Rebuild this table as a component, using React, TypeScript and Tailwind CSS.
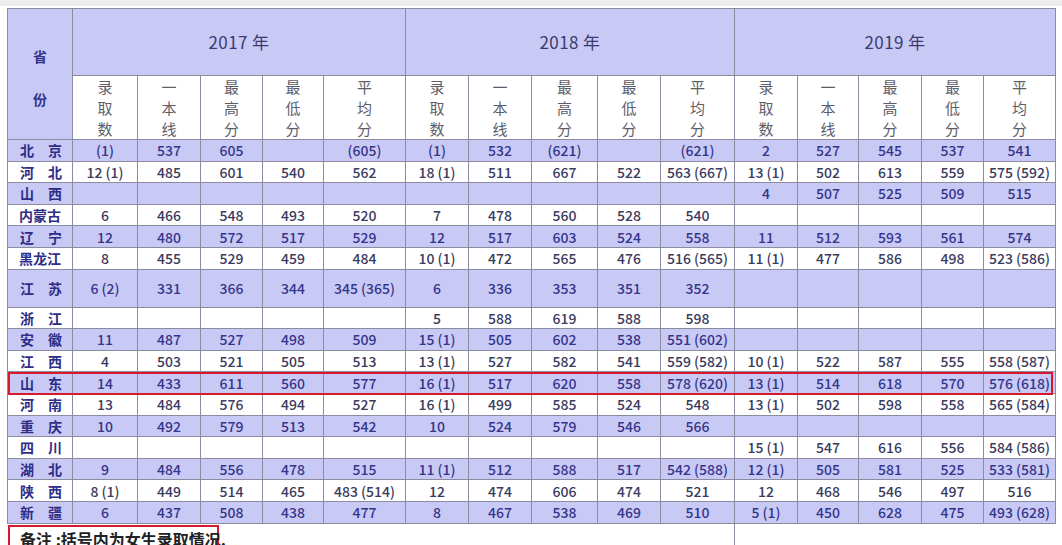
const cols2017 = ["录取数", "一本线", "最高分", "最低分", "平均分"];
const widths = [65, 65, 63, 62, 61, 82, 63, 63, 66, 63, 74, 63, 61, 63, 62, 72];

type Row = { p: string; hi?: boolean; tall?: boolean; d: string[] };

const rows: Row[] = [
  { p: "北京", hi: true, d: ["(1)", "537", "605", "", "(605)", "(1)", "532", "(621)", "", "(621)", "2", "527", "545", "537", "541"] },
  { p: "河北", d: ["12(1)", "485", "601", "540", "562", "18(1)", "511", "667", "522", "563(667)", "13(1)", "502", "613", "559", "575(592)"] },
  { p: "山西", hi: true, d: ["", "", "", "", "", "", "", "", "", "", "4", "507", "525", "509", "515"] },
  { p: "内蒙古", d: ["6", "466", "548", "493", "520", "7", "478", "560", "528", "540", "", "", "", "", ""] },
  { p: "辽宁", hi: true, d: ["12", "480", "572", "517", "529", "12", "517", "603", "524", "558", "11", "512", "593", "561", "574"] },
  { p: "黑龙江", d: ["8", "455", "529", "459", "484", "10(1)", "472", "565", "476", "516(565)", "11(1)", "477", "586", "498", "523(586)"] },
  { p: "江苏", hi: true, tall: true, d: ["6(2)", "331", "366", "344", "345(365)", "6", "336", "353", "351", "352", "", "", "", "", ""] },
  { p: "浙江", d: ["", "", "", "", "", "5", "588", "619", "588", "598", "", "", "", "", ""] },
  { p: "安徽", hi: true, d: ["11", "487", "527", "498", "509", "15 (1)", "505", "602", "538", "551(602)", "", "", "", "", ""] },
  { p: "江西", d: ["4", "503", "521", "505", "513", "13(1)", "527", "582", "541", "559(582)", "10(1)", "522", "587", "555", "558(587)"] },
  { p: "山东", hi: true, d: ["14", "433", "611", "560", "577", "16(1)", "517", "620", "558", "578(620)", "13(1)", "514", "618", "570", "576(618)"] },
  { p: "河南", d: ["13", "484", "576", "494", "527", "16(1)", "499", "585", "524", "548", "13(1)", "502", "598", "558", "565(584)"] },
  { p: "重庆", hi: true, d: ["10", "492", "579", "513", "542", "10", "524", "579", "546", "566", "", "", "", "", ""] },
  { p: "四川", d: ["", "", "", "", "", "", "", "", "", "", "15(1)", "547", "616", "556", "584(586)"] },
  { p: "湖北", hi: true, d: ["9", "484", "556", "478", "515", "11(1)", "512", "588", "517", "542(588)", "12(1)", "505", "581", "525", "533(581)"] },
  { p: "陕西", d: ["8(1)", "449", "514", "465", "483(514)", "12", "474", "606", "474", "521", "12", "468", "546", "497", "516"] },
  { p: "新疆", hi: true, d: ["6", "437", "508", "438", "477", "8", "467", "538", "469", "510", "5(1)", "450", "628", "475", "493(628)"] },
];

// the source shows a small gap before each bracket
function Value({ v }: { v: string }) {
  const i = v.indexOf("(");
  if (i <= 0 || v[i - 1] === " ") return <>{v}</>;
  return (
    <>
      {v.slice(0, i)}
      <span className="ml-[3px]">{v.slice(i)}</span>
    </>
  );
}

function Province({ name }: { name: string }) {
  const chars = name.split("");
  return (
    <div
      className={
        chars.length === 2
          ? "flex justify-between pl-[12px] pr-[10px]"
          : "flex justify-center"
      }
    >
      {chars.map((c, i) => (
        <span key={i}>{c}</span>
      ))}
    </div>
  );
}

export default function App() {
  const years = ["2017 年", "2018 年", "2019 年"];
  return (
    <div
      className="relative w-[1062px] h-[545px] overflow-hidden bg-white"
      style={{ fontFamily: '"Noto Sans CJK SC", "Noto Sans", sans-serif' }}
    >
      <div className="h-[6px] bg-[#ececec]" />
      <div className="relative ml-[7px] mt-[2px] w-[1048px]">
        <table className="table-fixed border-collapse w-[1048px] border border-[#8c8ca0]">
          <colgroup>
            {widths.map((w, i) => (
              <col key={i} style={{ width: w }} />
            ))}
          </colgroup>
          <thead>
            <tr className="h-[67px] bg-[#c9c9f6]">
              <th
                rowSpan={2}
                className="border border-[#8c8ca0] align-middle font-bold text-[14px] text-[#33338a]"
              >
                <div className="flex flex-col items-center gap-[22px] pt-[8px]">
                  <span>省</span>
                  <span>份</span>
                </div>
              </th>
              {years.map((y) => (
                <th
                  key={y}
                  colSpan={5}
                  className="border border-[#8c8ca0] font-normal text-[17px] text-[#3a3a6e] tracking-wide"
                >
                  {y}
                </th>
              ))}
            </tr>
            <tr className="h-[64px] bg-white">
              {years.flatMap((y) =>
                cols2017.map((c) => (
                  <th
                    key={y + c}
                    className="border-x border-[#8c8ca0] font-normal text-[15px] text-[#5e5e6a] leading-[21px] align-middle"
                  >
                    <div className="flex flex-col items-center">
                      {c.split("").map((ch, i) => (
                        <span key={i}>{ch}</span>
                      ))}
                    </div>
                  </th>
                ))
              )}
            </tr>
          </thead>
          <tbody>
            {rows.map((r) => (
              <tr
                key={r.p}
                className={
                  (r.hi ? "bg-[#c9c9f6] text-[#35358a] " : "bg-white text-[#3b3b5e] ") +
                  (r.tall ? "h-[38px]" : "h-[21.6px]")
                }
              >
                <td className="border border-[#8c8ca0] text-[14px] font-bold text-[#2e2e86] leading-none">
                  <Province name={r.p} />
                </td>
                {r.d.map((v, i) => (
                  <td
                    key={i}
                    className="border border-[#8c8ca0] text-center text-[14px] font-medium leading-none whitespace-nowrap"
                  >
                    <Value v={v} />
                  </td>
                ))}
              </tr>
            ))}
          </tbody>
        </table>

        {/* highlight box on the 山东 row */}
        <div className="absolute left-[1px] top-[364px] w-[1045px] h-[23px] border-2 border-[#d6192b] pointer-events-none" />
        {/* stray column line under the table */}
        <div className="absolute left-[727px] top-[515px] w-px h-[30px] bg-[#8c8ca0]" />

        <div className="mt-[1px] ml-[1px] w-[211px] h-[24px] border-2 border-[#d6192b] px-[10px] text-[16px] font-bold text-[#222] leading-[24px] whitespace-nowrap">
          备注 :括号内为女生录取情况.
        </div>
      </div>
    </div>
  );
}
